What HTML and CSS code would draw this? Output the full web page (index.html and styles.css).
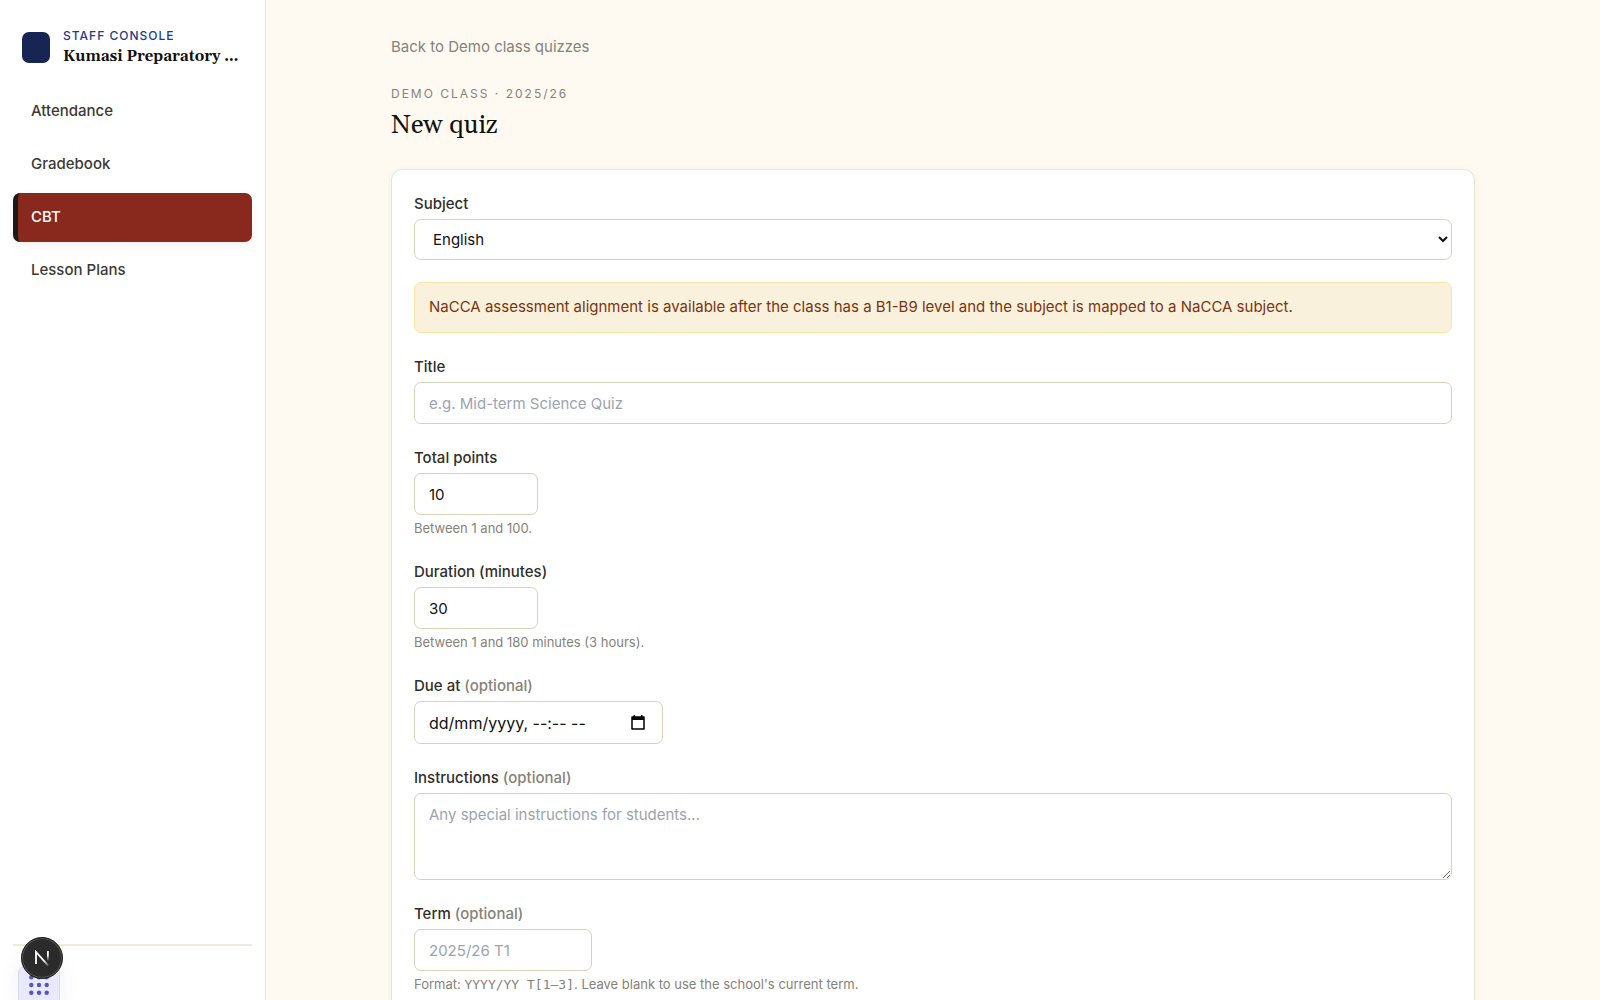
FILE: index.html
```html
<!DOCTYPE html>
<html lang="en">
<head>
  <meta charset="UTF-8" />
  <title>New quiz</title>
  <meta name="viewport" content="width=device-width, initial-scale=1" />
  <link rel="stylesheet" href="styles.css">
</head>
<body>

  <div class="layout">
    <aside class="sidebar">
      <div class="brand">
        <span class="brand-mark"></span>
        <div class="brand-text">
          <div class="brand-label">Staff Console</div>
          <div class="brand-name">Kumasi Preparatory School</div>
        </div>
      </div>
      <nav class="nav">
        <a href="#attendance">Attendance</a>
        <a href="#gradebook">Gradebook</a>
        <a href="#cbt" class="active">CBT</a>
        <a href="#lesson-plans">Lesson Plans</a>
      </nav>
      <div class="sidebar-footer"></div>
    </aside>

    <main class="main">
      <div class="container">
        <a class="back-link" href="#quizzes">Back to Demo class quizzes</a>

        <header class="page-header">
          <p class="eyebrow">Demo class · 2025/26</p>
          <h1>New quiz</h1>
        </header>

        <form class="card">
          <div class="field">
            <label for="subject">Subject</label>
            <select id="subject" class="control select">
              <option>English</option>
            </select>
          </div>

          <div class="notice">NaCCA assessment alignment is available after the class has a B1-B9 level and the subject is mapped to a NaCCA subject.</div>

          <div class="field">
            <label for="title">Title</label>
            <input id="title" class="control" type="text" placeholder="e.g. Mid-term Science Quiz">
          </div>

          <div class="field">
            <label for="points">Total points</label>
            <input id="points" class="control short" type="number" min="1" max="100" value="10">
            <p class="hint">Between 1 and 100.</p>
          </div>

          <div class="field">
            <label for="duration">Duration (minutes)</label>
            <input id="duration" class="control short" type="number" min="1" max="180" value="30">
            <p class="hint">Between 1 and 180 minutes (3 hours).</p>
          </div>

          <div class="field">
            <label for="due">Due at <span class="optional">(optional)</span></label>
            <div class="control date-box">
              <input id="due" class="date-input" type="text" placeholder="dd/mm/yyyy, --:-- --">
              <button class="date-button" type="button" aria-label="Open calendar">
                <svg width="14" height="15" viewBox="0 0 14 15">
                  <path d="M1 2h12v12H1z" fill="none" stroke="#000" stroke-width="1.5" stroke-linejoin="round"/>
                  <path d="M1 2h12v3H1zM2.5 0h1.5v2H2.5zM10 0h1.5v2H10z" fill="#000"/>
                </svg>
              </button>
            </div>
          </div>

          <div class="field">
            <label for="instructions">Instructions <span class="optional">(optional)</span></label>
            <textarea id="instructions" class="control area" placeholder="Any special instructions for students..."></textarea>
          </div>

          <div class="field">
            <label for="term">Term <span class="optional">(optional)</span></label>
            <input id="term" class="control medium" type="text" placeholder="2025/26 T1">
            <p class="hint">Format: <code>YYYY/YY T[1–3]</code>. Leave blank to use the school's current term.</p>
          </div>
        </form>
      </div>
    </main>
  </div>

  <!-- Floating buttons -->
  <button class="apps-button" type="button" aria-label="Apps">
    <svg width="20" height="20" viewBox="0 0 20 20" fill="#5b50c8">
      <circle cx="2.300" cy="2.300" r="2.200"/><circle cx="10" cy="2.300" r="2.200"/><circle cx="17.700" cy="2.300" r="2.200"/>
      <circle cx="2.300" cy="10" r="2.200"/><circle cx="10" cy="10" r="2.200"/><circle cx="17.700" cy="10" r="2.200"/>
      <circle cx="2.300" cy="17.700" r="2.200"/><circle cx="10" cy="17.700" r="2.200"/><circle cx="17.700" cy="17.700" r="2.200"/>
    </svg>
  </button>
  <button class="dev-button" type="button" aria-label="Dev tools">
    <svg width="14" height="16" viewBox="0 0 14 16" fill="none" stroke-width="1.8">
      <defs>
        <linearGradient id="fadeDiag" x1="0" y1="0" x2="14" y2="16" gradientUnits="userSpaceOnUse">
          <stop offset="0.65" stop-color="#fff"/>
          <stop offset="1" stop-color="#fff" stop-opacity="0.1"/>
        </linearGradient>
        <linearGradient id="fadeDown" x1="0" y1="1" x2="0" y2="11" gradientUnits="userSpaceOnUse">
          <stop offset="0.4" stop-color="#fff"/>
          <stop offset="1" stop-color="#fff" stop-opacity="0"/>
        </linearGradient>
      </defs>
      <path d="M1 14V2L13.200 15.600" stroke="url(#fadeDiag)"/>
      <path d="M12 1h1.800v10H12z" fill="url(#fadeDown)"/>
    </svg>
  </button>

</body>
</html>
```

FILE: styles.css
```css
* {
  box-sizing: border-box;
}

body {
  margin: 0;
  background: #fefaf2;
  color: #1c1917;
  font-family: Inter, sans-serif;
  font-size: 15px;
  line-height: 24px;
}

.layout {
  display: flex;
  height: 100vh;
}

/* Sidebar */
.sidebar {
  display: flex;
  flex-direction: column;
  width: 266px;
  flex-shrink: 0;
  padding: 26px 13px 0;
  background: #fff;
  border-right: 1px solid #e8e5d4;
}

.brand {
  display: flex;
  align-items: center;
  gap: 13px;
  padding: 0 9px;
  margin-bottom: 18px;
}

.brand-mark {
  width: 28px;
  height: 31px;
  flex-shrink: 0;
  border-radius: 7px;
  background: #172554;
}

.brand-text {
  min-width: 0;
}

.brand-label {
  color: #1e3a8a;
  font-size: 12px;
  font-weight: 500;
  line-height: 19px;
  letter-spacing: 1px;
  text-transform: uppercase;
}

.brand-name {
  overflow: hidden;
  color: #111;
  font-family: Gelasio, Georgia, "Liberation Serif", serif;
  font-size: 15px;
  font-weight: 700;
  line-height: 24px;
  text-overflow: ellipsis;
  white-space: nowrap;
}

.nav {
  display: flex;
  flex-direction: column;
  gap: 4px;
}

.nav a {
  padding: 12px 13px 13px;
  border-left: 5px solid transparent;
  border-radius: 7px;
  color: #3b3934;
  font-weight: 500;
  text-decoration: none;
}

.nav a.active {
  border-left-color: #1c1917;
  background: #89281d;
  box-shadow: 0 4px 10px rgba(0, 0, 0, 0.06);
  color: #fff;
}

.sidebar-footer {
  height: 56px;
  margin-top: auto;
  border-top: 2px solid #ecebdd;
}

/* Page */
.main {
  flex: 1;
  min-width: 0;
  padding: 35px 24px;
  overflow-y: auto;
  scrollbar-width: none;
}

.container {
  max-width: 1084px;
  margin: 0 auto;
}

.back-link {
  display: block;
  color: #85827a;
  text-decoration: none;
}

.page-header {
  margin: 25px 0 24px;
}

.eyebrow {
  margin: 0;
  color: #85827a;
  font-size: 12px;
  line-height: 19px;
  letter-spacing: 2px;
  text-transform: uppercase;
}

h1 {
  margin: 4px 0 0;
  color: #111;
  font-family: Gelasio, Georgia, "Liberation Serif", serif;
  font-size: 26px;
  font-weight: 400;
  line-height: 38px;
}

.card {
  display: flex;
  flex-direction: column;
  gap: 22px;
  padding: 22px;
  border: 1px solid #e8e5d4;
  border-radius: 11px;
  background: #fff;
  box-shadow: 0 2px 8px rgba(120, 110, 50, 0.06);
}

.field {
  display: flex;
  flex-direction: column;
  align-items: flex-start;
  gap: 3px;
}

label {
  color: #302e2a;
  font-weight: 500;
}

.optional {
  color: #85827a;
}

.control {
  width: 100%;
  height: 42px;
  padding: 0 14px;
  border: 1px solid #d6d3b8;
  border-radius: 7px;
  background: #fff;
  color: #111;
  font-family: inherit;
  font-size: 15px;
  line-height: 24px;
}

.control::placeholder {
  color: #9ca3af;
}

.select {
  height: 41px;
}

.short {
  width: 124px;
  appearance: textfield;
}

.medium {
  width: 178px;
}

.area {
  display: block;
  height: 87px;
  padding: 9px 14px;
  resize: vertical;
}

.date-box {
  display: flex;
  align-items: center;
  width: 249px;
  height: 43px;
  padding-right: 17px;
}

.date-input {
  flex: 1;
  min-width: 0;
  padding: 0;
  border: 0;
  background: none;
  font: inherit;
  font-size: 16px;
}

.date-input::placeholder {
  color: #111;
}

.date-button {
  display: flex;
  padding: 0;
  border: 0;
  background: none;
  cursor: pointer;
}

.hint {
  margin: 0;
  color: #85827a;
  font-size: 13px;
  line-height: 20px;
}

.hint code {
  font-family: "DejaVu Sans Mono", monospace;
  font-size: 13px;
}

.notice {
  padding: 12px 14px 13px;
  border: 1px solid #fae6a0;
  border-radius: 7px;
  background: #faf1dc;
  color: #78350f;
}

/* Floating buttons */
.apps-button {
  position: fixed;
  left: 18px;
  bottom: -7px;
  display: flex;
  align-items: center;
  justify-content: center;
  width: 42px;
  height: 42px;
  padding: 0 0 2px;
  border: 1px solid #d9daee;
  border-radius: 8px;
  background: #e8eafb;
  box-shadow: 0 0 24px rgba(80, 80, 160, 0.08);
}

.dev-button {
  position: fixed;
  left: 21px;
  bottom: 21px;
  display: flex;
  align-items: center;
  justify-content: center;
  width: 42px;
  height: 42px;
  padding: 0;
  border: 1px solid #1a1a1a;
  border-radius: 50%;
  background: #2b2b2b;
  box-shadow: inset 0 0 0 1px #555;
}
```
